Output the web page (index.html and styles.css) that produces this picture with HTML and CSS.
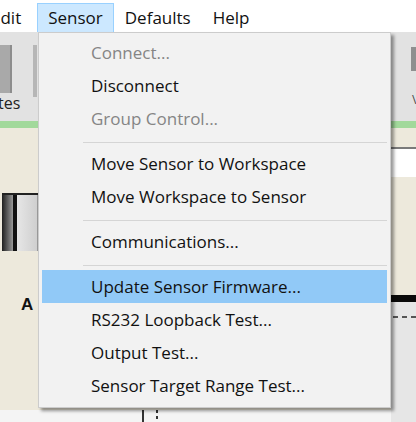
FILE: index.html
```html
<!DOCTYPE html>
<html>
<head>
<meta charset="utf-8">
<link rel="stylesheet" href="styles.css">
</head>
<body>
<div class="screen">
  <div class="menubar">
    <div class="mb-item mb-edit">Edit</div>
    <div class="mb-item mb-active">Sensor</div>
    <div class="mb-item">Defaults</div>
    <div class="mb-item">Help</div>
  </div>
  <div class="app">
    <div class="col-left">
      <div class="toolbar tb-left">
        <div class="tb-buttons">
          <div class="tb-btn"></div>
          <div class="tb-sep"></div>
        </div>
        <div class="tb-label">tes</div>
      </div>
      <div class="green"></div>
      <div class="beige left-beige">
        <div class="gauge">
          <div class="gauge-dark"></div>
          <div class="gauge-line"></div>
          <div class="gauge-light"></div>
        </div>
        <div class="axis-label">A</div>
      </div>
      <div class="bottom"></div>
    </div>
    <div class="col-mid">
      <div class="mid-fill"></div>
      <div class="bottom mid-bottom">
        <span class="tick solid"></span>
        <span class="tick dashed"></span>
      </div>
    </div>
    <div class="col-right">
      <div class="toolbar tb-right">
        <div class="tb-rbar"></div>
        <div class="tb-rlabel">\</div>
      </div>
      <div class="green"></div>
      <div class="beige r-beige1"></div>
      <div class="r-rule"></div>
      <div class="r-field"></div>
      <div class="beige r-beige2"></div>
      <div class="r-black"></div>
      <div class="r-gray"><div class="r-dash"></div></div>
    </div>
  </div>

  <div class="menu">
    <div class="mi disabled">Connect...</div>
    <div class="mi">Disconnect</div>
    <div class="mi disabled">Group Control...</div>
    <div class="sep"></div>
    <div class="mi">Move Sensor to Workspace</div>
    <div class="mi">Move Workspace to Sensor</div>
    <div class="sep"></div>
    <div class="mi">Communications...</div>
    <div class="sep"></div>
    <div class="mi hover">Update Sensor Firmware...</div>
    <div class="mi">RS232 Loopback Test...</div>
    <div class="mi">Output Test...</div>
    <div class="mi">Sensor Target Range Test...</div>
  </div>
</div>
</body>
</html>
```

FILE: styles.css
```css
* { box-sizing: border-box; }
html, body { margin: 0; padding: 0; }
body {
  width: 416px;
  height: 422px;
  overflow: hidden;
  background: #ffffff;
  font-family: "Open Sans", "Noto Sans", sans-serif;
  font-size: 17px;
  color: #111;
}
.screen {
  position: relative;
  width: 416px;
  height: 422px;
  display: flex;
  flex-direction: column;
}

/* menubar */
.menubar {
  height: 32px;
  padding-top: 3px;
  display: flex;
  background: #ffffff;
  flex: none;
}
.mb-item {
  height: 29px;
  line-height: 27px;
  padding: 0 10px;
  border: 1px solid transparent;
  border-bottom: none;
  white-space: nowrap;
}
.mb-edit { margin-left: -20px; padding-right: 15px; }
.mb-active {
  background: #cce8ff;
  border-color: #99d1ff;
}

/* app behind */
.app {
  flex: 1;
  display: grid;
  grid-template-columns: 38px 1fr 25px;
  min-height: 0;
}
.col-left, .col-right, .col-mid {
  display: flex;
  flex-direction: column;
  min-height: 0;
}
.toolbar {
  background: #e2e2e2;
  height: 89px;
  flex: none;
}
.tb-left { padding-top: 13px; }
.tb-buttons { display: flex; height: 52px; }
.tb-btn {
  width: 12px;
  height: 48px;
  background: #a9a9a9;
  border-right: 2px solid #8d8d8d;
}
.tb-sep {
  width: 4px;
  height: 52px;
  margin-left: 21px;
  background: #b6b6b6;
}
.tb-label {
  margin-left: -2px;
  font-size: 16px;
  line-height: 16px;
  margin-top: -2px;
  color: #222;
}
.tb-right { padding-top: 15px; }
.tb-rbar {
  width: 5px;
  height: 24px;
  margin-left: 20px;
  background: #8f8f8f;
}
.tb-rlabel {
  margin-left: 21px;
  margin-top: 20px;
  font-size: 12px;
  color: #444;
}
.green { height: 7px; background: #a2d99b; flex: none; }
.beige { background: #ede9dc; }
.left-beige {
  flex: 1;
  padding-top: 65px;
}
.gauge {
  display: flex;
  height: 58px;
  margin-left: 2px;
  border-top: 2px solid #222;
}
.gauge-dark { width: 11px; background: linear-gradient(to right, #1e1e1e, #9a9a9a); }
.gauge-line { width: 4px; background: #111; }
.gauge-light { flex: 1; background: linear-gradient(to right, #e6e6e6, #cfcfcf); border-right: 1px solid #999; }
.axis-label {
  margin-top: 45px;
  margin-left: 21px;
  font-family: "Liberation Sans", sans-serif;
  font-size: 17px;
  font-weight: bold;
  line-height: 18px;
  color: #111;
}
.bottom { height: 12px; background: #f4f4f4; flex: none; }
.mid-fill { flex: 1; background: #ede9dc; }
.mid-bottom { position: relative; display: flex; gap: 12px; padding-left: 104px; }
.tick { display: block; width: 2px; height: 12px; }
.tick.solid { background: #333; }
.tick.dashed { background: repeating-linear-gradient(to bottom, #333 0 3px, transparent 3px 6px); }

.r-beige1 { height: 19px; flex: none; }
.r-rule { height: 2px; background: #7a7a7a; flex: none; }
.r-field { height: 28px; background: #ffffff; flex: none; }
.r-beige2 { height: 118px; flex: none; }
.r-black { height: 7px; background: #0a0a0a; flex: none; }
.r-gray { flex: 1; background: #e6e6e6; padding-top: 14px; }
.r-dash {
  height: 2px;
  margin-left: 2px;
  background: repeating-linear-gradient(to right, #555 0 5px, transparent 5px 9px);
}

/* dropdown menu */
.menu {
  position: absolute;
  left: 38px;
  top: 32px;
  width: 353px;
  height: 376px;
  background: #f2f2f2;
  border: 1px solid #cccccc;
  padding: 3px 3px 5px 3px;
  box-shadow: 3px 3px 3px rgba(0,0,0,0.4);
}
.mi {
  height: 33px;
  line-height: 34px;
  padding-left: 49px;
  white-space: nowrap;
  color: #111;
}
.mi.disabled { color: #858585; }
.mi.hover { background: #91c9f7; }
.sep {
  height: 12px;
  padding-top: 7px;
  margin-left: 41px;
}
.sep::before {
  content: "";
  display: block;
  height: 1px;
  background: #d5d5d5;
}
```
